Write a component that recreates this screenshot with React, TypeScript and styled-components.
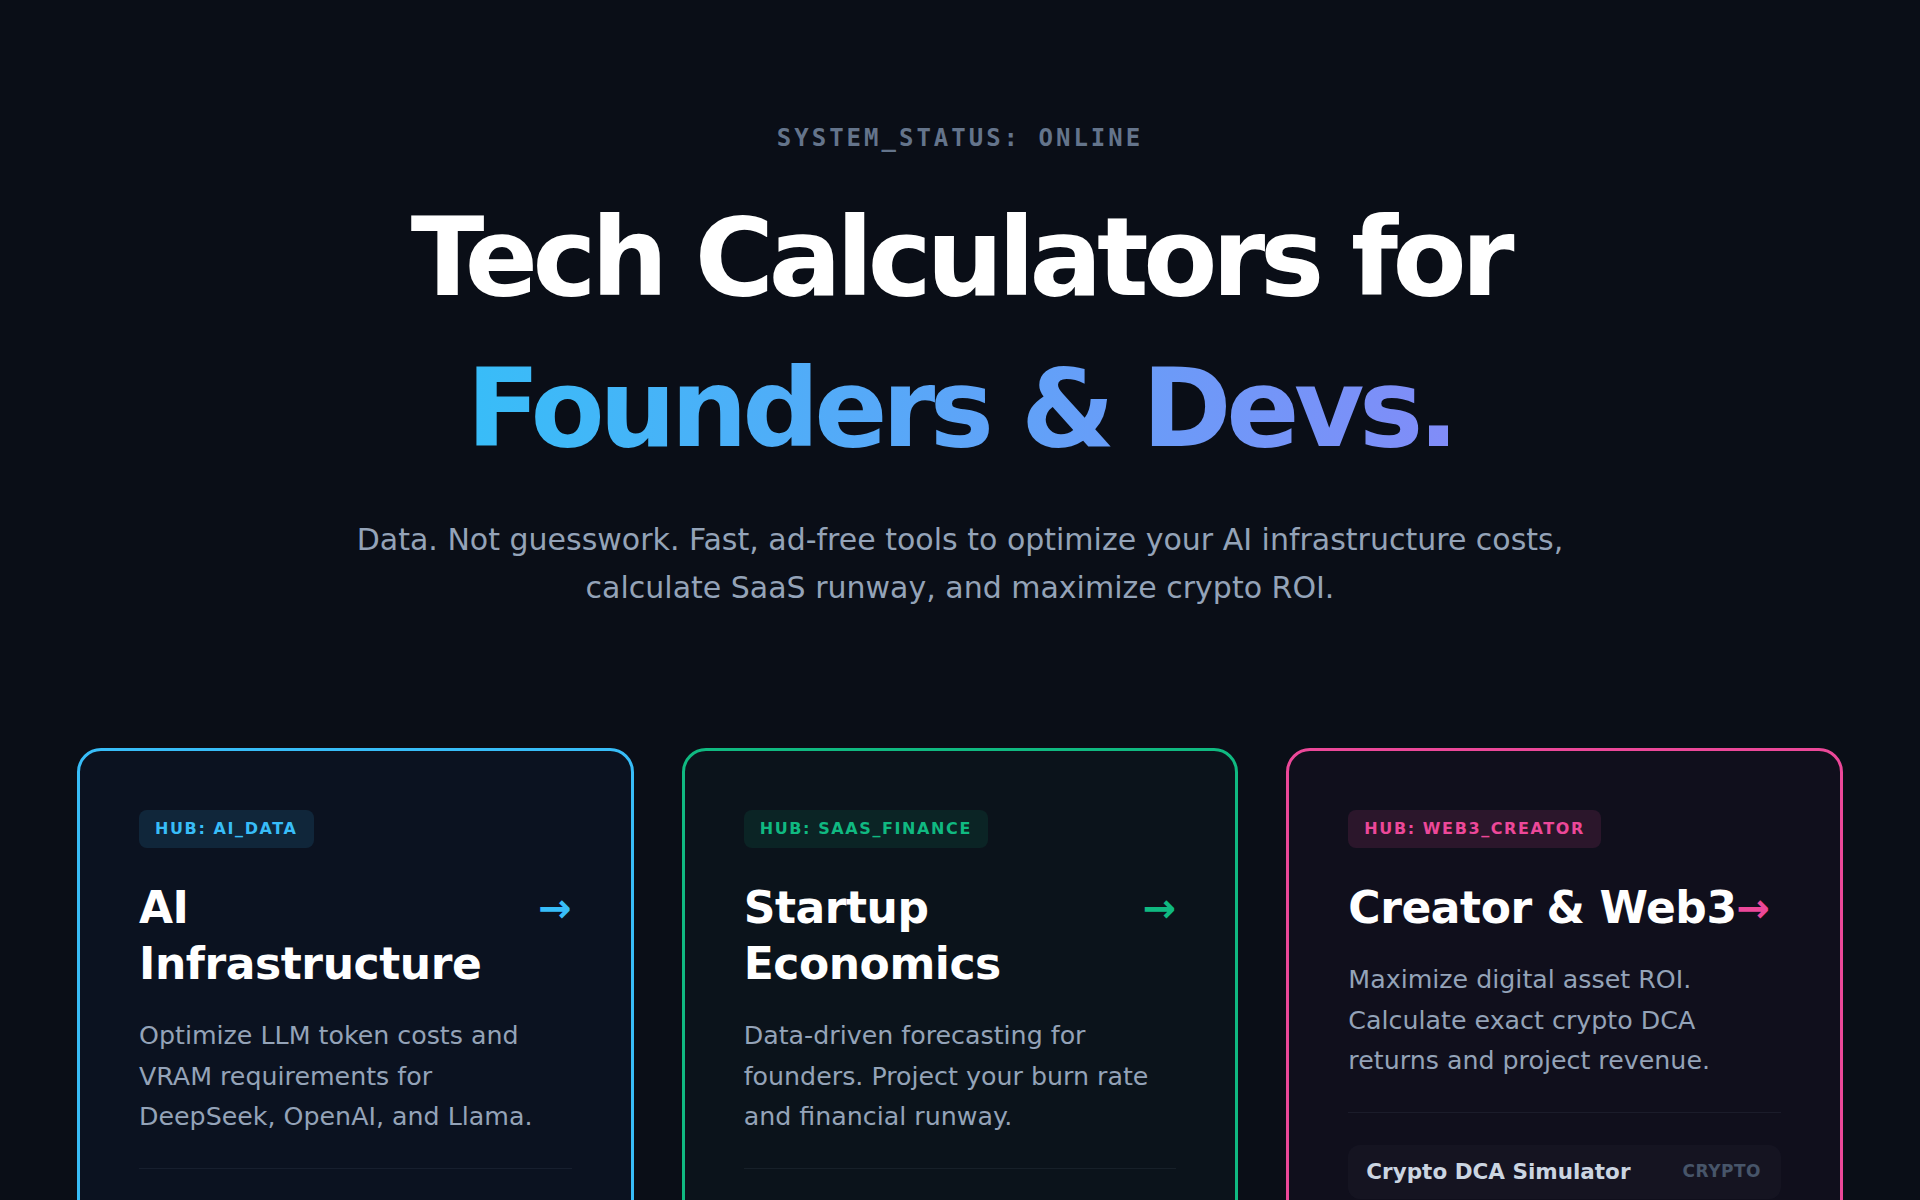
import React from 'react';
import styled, { createGlobalStyle } from 'styled-components';

const GlobalStyle = createGlobalStyle`
    html, body {
        margin: 0;
        padding: 0;
        background: #0a0e17;
    }
    * {
        box-sizing: border-box;
    }
`;

const colours = {
    page: '#0a0e17',
    white: '#ffffff',
    muted: '#94a3b8',
    status: '#64748b',
    divider: 'rgba(148, 163, 184, 0.09)',
};

type Accent = {
    line: string
    card: string
    badge: string
};

const accents: Record<string, Accent> = {
    ai: { line: '#38bdf8', card: '#0b1220', badge: 'rgba(56, 189, 248, 0.12)' },
    saas: { line: '#10b981', card: '#0b131b', badge: 'rgba(16, 185, 129, 0.1)' },
    web3: { line: '#ec4899', card: '#100f1c', badge: 'rgba(236, 72, 153, 0.12)' },
};

const Page = styled.main`
    min-height: 100vh;
    padding: 124px 77px 0;
    background: ${ colours.page };
    font-family: "DejaVu Sans", "Noto Sans", sans-serif;
    overflow: hidden;
`;

const Hero = styled.section`
    display: flex;
    flex-direction: column;
    align-items: center;
    text-align: center;
`;

const StatusLine = styled.div`
    font-family: "DejaVu Sans Mono", "Liberation Mono", monospace;
    font-weight: 700;
    font-size: 24px;
    line-height: 29px;
    letter-spacing: 3px;
    color: ${ colours.status };
    margin-bottom: 29px;
`;

const Headline = styled.h1`
    margin: 0;
    font-size: 108px;
    line-height: 1.4;
    font-weight: 700;
    letter-spacing: -0.05em;
    color: ${ colours.white };
`;

const GradientText = styled.span`
    background: linear-gradient(90deg, #38bdf8 0%, #818cf8 100%);
    -webkit-background-clip: text;
    background-clip: text;
    color: transparent;
`;

const Lead = styled.p`
    margin: 32px 0 0;
    max-width: 1240px;
    font-size: 30px;
    line-height: 48px;
    color: ${ colours.muted };
`;

const HubGrid = styled.section`
    display: grid;
    grid-template-columns: repeat(3, 1fr);
    gap: 48px;
    margin-top: 136px;
`;

const HubCard = styled.article<{ $accent: Accent }>`
    display: flex;
    flex-direction: column;
    padding: 59px;
    border: 3px solid ${ p => p.$accent.line };
    border-radius: 24px;
    background: ${ p => p.$accent.card };
    min-height: 700px;
`;

const HubBadge = styled.span<{ $accent: Accent }>`
    align-self: flex-start;
    padding: 9px 16px;
    border-radius: 8px;
    background: ${ p => p.$accent.badge };
    color: ${ p => p.$accent.line };
    font-size: 16px;
    line-height: 20px;
    font-weight: 700;
    letter-spacing: 0.1em;
    margin-bottom: 32px;
`;

const TitleRow = styled.div`
    display: flex;
    align-items: flex-start;
`;

const HubTitle = styled.h2`
    margin: 0;
    font-size: 44px;
    line-height: 56px;
    font-weight: 700;
    letter-spacing: -0.01em;
    color: ${ colours.white };
`;

const Arrow = styled.span<{ $colour: string }>`
    flex-shrink: 0;
    font-size: 40px;
    line-height: 56px;
    font-weight: 700;
    color: ${ p => p.$colour };
`;

const HubDescription = styled.p`
    margin: 24px 0 0;
    font-size: 25.3px;
    line-height: 40.5px;
    color: ${ colours.muted };
`;

const Divider = styled.hr`
    border: none;
    height: 1px;
    background: ${ colours.divider };
    margin: 30px 0 32px;
`;

const ToolList = styled.ul`
    list-style: none;
    margin: 0;
    padding: 0;
    display: flex;
    flex-direction: column;
    gap: 16px;
`;

const ToolItem = styled.li`
    display: flex;
    align-items: center;
    justify-content: space-between;
    padding: 13px 20px 14px 18px;
    border-radius: 12px;
    background: rgba(148, 163, 184, 0.04);
`;

const ToolName = styled.span`
    font-size: 21.5px;
    line-height: 27px;
    font-weight: 700;
    color: #cbd5e1;
`;

const ToolTag = styled.span`
    font-size: 17px;
    font-weight: 700;
    letter-spacing: 0.03em;
    color: #475569;
`;

type Hub = {
    key: string
    badge: string
    title: string
    description: string
    tools: { name: string, tag: string }[]
};

const hubs: Hub[] = [
    {
        key: 'ai',
        badge: 'HUB: AI_DATA',
        title: 'AI Infrastructure',
        description: 'Optimize LLM token costs and VRAM requirements for DeepSeek, OpenAI, and Llama.',
        tools: [
            { name: 'LLM Token Cost Calculator', tag: 'AI' },
            { name: 'GPU VRAM Estimator', tag: 'AI' },
        ],
    },
    {
        key: 'saas',
        badge: 'HUB: SAAS_FINANCE',
        title: 'Startup Economics',
        description: 'Data-driven forecasting for founders. Project your burn rate and financial runway.',
        tools: [
            { name: 'SaaS Runway Calculator', tag: 'SAAS' },
            { name: 'Burn Rate Forecaster', tag: 'SAAS' },
        ],
    },
    {
        key: 'web3',
        badge: 'HUB: WEB3_CREATOR',
        title: 'Creator & Web3',
        description: 'Maximize digital asset ROI. Calculate exact crypto DCA returns and project revenue.',
        tools: [
            { name: 'Crypto DCA Simulator', tag: 'CRYPTO' },
            { name: 'Creator Revenue Projector', tag: 'CREATOR' },
        ],
    },
];

export default function App(): JSX.Element {
    return (
        <>
            <GlobalStyle />
            <Page>
                <Hero>
                    <StatusLine>SYSTEM_STATUS: ONLINE</StatusLine>
                    <Headline>
                        Tech Calculators for<br />
                        <GradientText>Founders &amp; Devs.</GradientText>
                    </Headline>
                    <Lead>
                        Data. Not guesswork. Fast, ad-free tools to optimize your AI infrastructure costs,
                        calculate SaaS runway, and maximize crypto ROI.
                    </Lead>
                </Hero>
                <HubGrid>
                    { hubs.map( hub => {
                        const accent = accents[ hub.key ];
                        return (
                            <HubCard key={ hub.key } $accent={ accent }>
                                <HubBadge $accent={ accent }>{ hub.badge }</HubBadge>
                                <TitleRow>
                                    <HubTitle>{ hub.title }</HubTitle>
                                    <Arrow $colour={ accent.line }>→</Arrow>
                                </TitleRow>
                                <HubDescription>{ hub.description }</HubDescription>
                                <Divider />
                                <ToolList>
                                    { hub.tools.map( tool => (
                                        <ToolItem key={ tool.name }>
                                            <ToolName>{ tool.name }</ToolName>
                                            <ToolTag>{ tool.tag }</ToolTag>
                                        </ToolItem>
                                    ) ) }
                                </ToolList>
                            </HubCard>
                        );
                    } ) }
                </HubGrid>
            </Page>
        </>
    );
}
